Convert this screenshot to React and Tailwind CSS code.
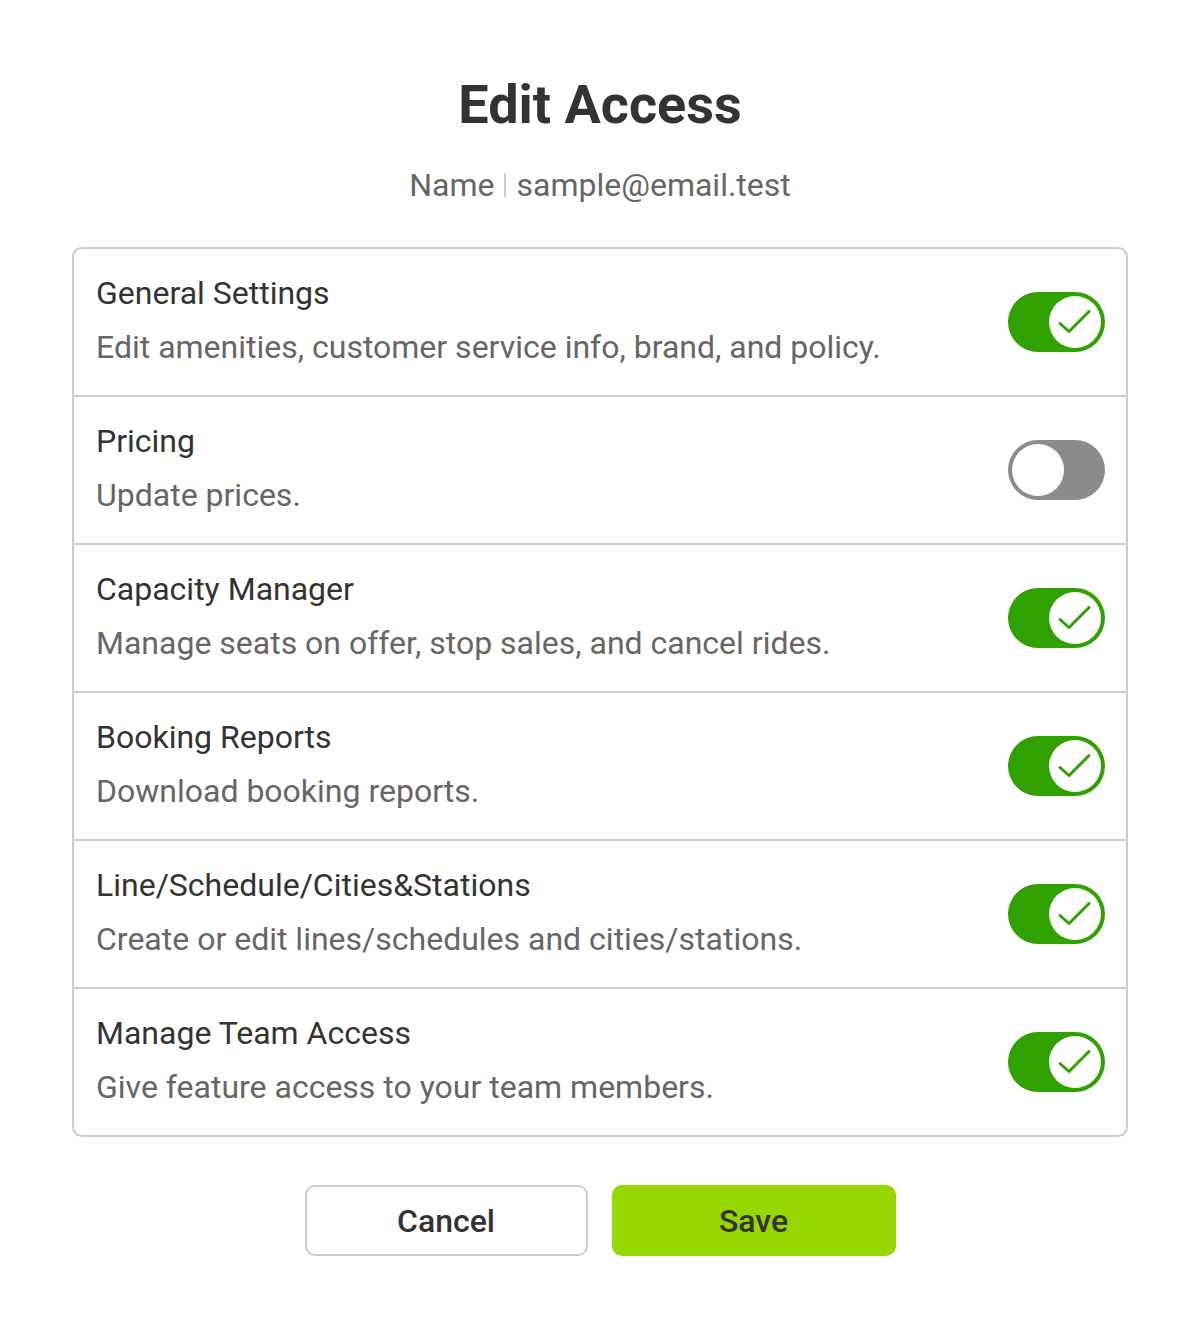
import React from "react";

const rows = [
  { title: "General Settings", desc: "Edit amenities, customer service info, brand, and policy.", on: true },
  { title: "Pricing", desc: "Update prices.", on: false },
  { title: "Capacity Manager", desc: "Manage seats on offer, stop sales, and cancel rides.", on: true },
  { title: "Booking Reports", desc: "Download booking reports.", on: true },
  { title: "Line/Schedule/Cities&Stations", desc: "Create or edit lines/schedules and cities/stations.", on: true },
  { title: "Manage Team Access", desc: "Give feature access to your team members.", on: true },
];

function Toggle({ on }) {
  if (on) {
    return (
      <div className="w-[97px] h-[60px] rounded-full bg-[#31a100] flex items-center justify-end pr-[4px] shrink-0">
        <div className="w-[52px] h-[52px] rounded-full bg-white">
          <svg width="52" height="52" viewBox="0 0 52 52" fill="none">
            <path d="M11 27.5 L20 35.5 L40 15.5" stroke="#31a100" strokeWidth="3" strokeLinecap="round" strokeLinejoin="round" />
          </svg>
        </div>
      </div>
    );
  }
  return (
    <div className="w-[97px] h-[60px] rounded-full bg-[#8c8c8c] flex items-center justify-start pl-[4px] shrink-0">
      <div className="w-[52px] h-[52px] rounded-full bg-white" />
    </div>
  );
}

export default function App() {
  return (
    <div className="w-[1200px] min-h-[1328px] bg-white flex flex-col items-center pt-[74px]" style={{ fontFamily: "Roboto, 'Liberation Sans', sans-serif" }}>
      <h1 className="text-[54px] font-bold text-[#333333] leading-[62px]">Edit Access</h1>
      <div className="mt-[29px] text-[32px] text-[#666666] leading-[40px] flex items-center">
        <span>Name</span>
        <span className="mx-[10px] w-[2px] h-[24px] bg-[#cccccc] inline-block" />
        <span>sample@email.test</span>
      </div>
      <div className="mt-[42px] w-[1056px] border-2 border-[#cccccc] rounded-[10px] flex flex-col">
        {rows.map((r, i) => (
          <div
            key={i}
            className={
              "flex items-center justify-between pl-[22px] pr-[21px] " +
              (i === 0 ? "h-[146px]" : "h-[148px] border-t-2 border-[#cccccc]")
            }
          >
            <div className="flex flex-col mb-[4px]">
              <div className="text-[32px] text-[#333333] leading-[40px]">{r.title}</div>
              <div className="text-[32px] text-[#666666] leading-[40px] mt-[14px]">{r.desc}</div>
            </div>
            <Toggle on={r.on} />
          </div>
        ))}
      </div>
      <div className="mt-[48px] flex gap-[24px]">
        <button className="w-[283px] h-[71px] border-2 border-[#cccccc] rounded-[10px] bg-white text-[32px] font-medium text-[#333333]">Cancel</button>
        <button className="w-[284px] h-[71px] rounded-[10px] bg-[#97d700] text-[32px] font-medium text-[#333333]">Save</button>
      </div>
    </div>
  );
}
